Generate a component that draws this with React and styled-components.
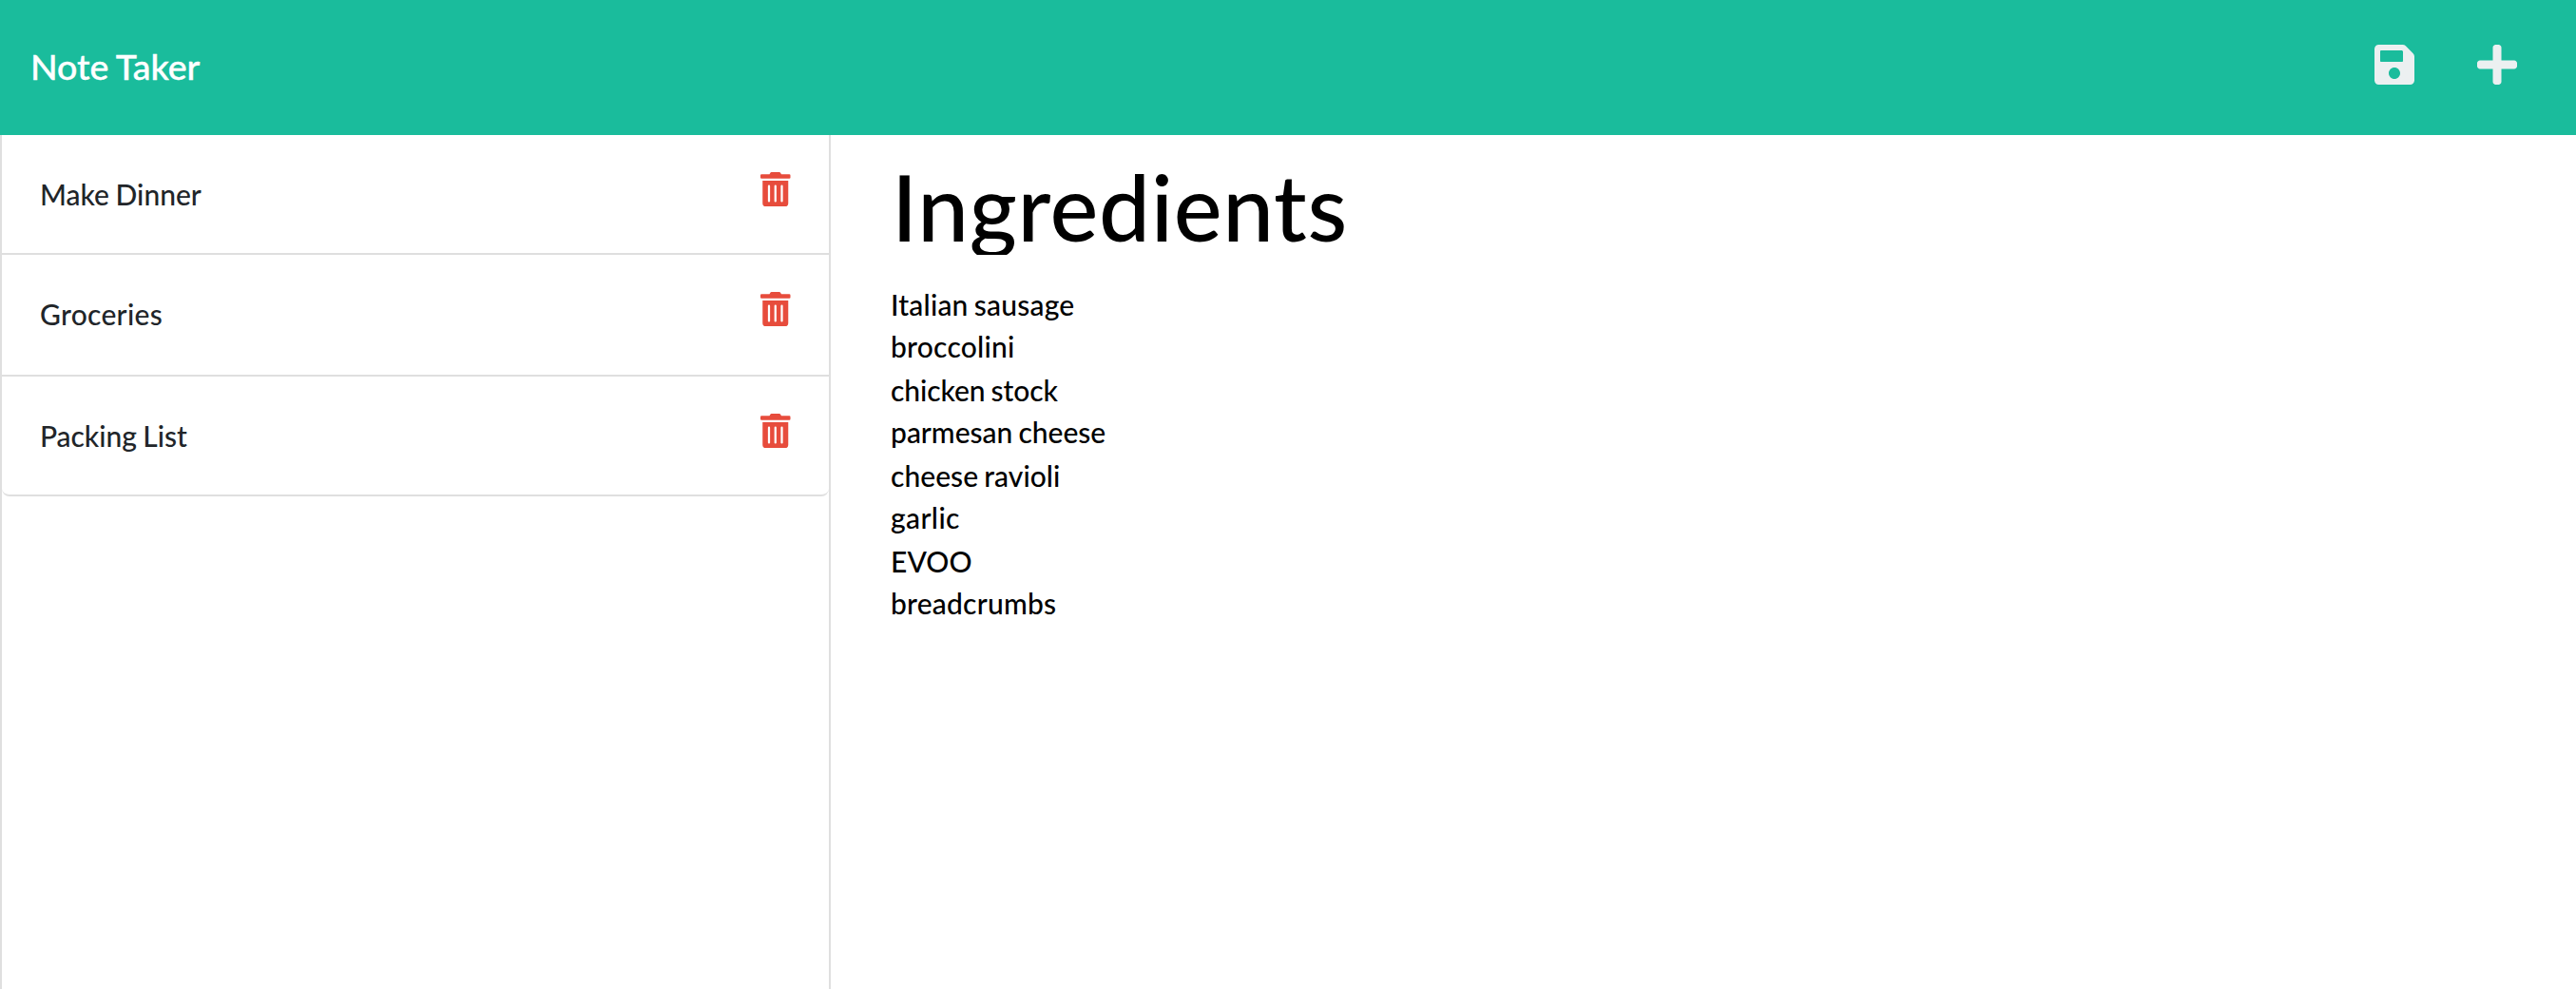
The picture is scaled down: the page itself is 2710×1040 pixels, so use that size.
import React from "react";
import styled, { createGlobalStyle } from "styled-components";
import { FaSave, FaPlus, FaTrashAlt } from "react-icons/fa";

const GlobalStyle = createGlobalStyle`
  *, *::before, *::after { box-sizing: border-box; }
  body {
    margin: 0;
    background: #fff;
    color: #212529;
    font-family: Lato, "Open Sans", sans-serif;
    font-size: 30px;
    font-weight: 500;
    line-height: 44px;
  }
`;

const Page = styled.div`
  display: flex;
  flex-direction: column;
  height: 100vh;
  overflow: hidden;
`;

const Navbar = styled.nav`
  display: flex;
  flex: none;
  align-items: center;
  justify-content: space-between;
  height: 142px;
  padding: 0 62px 6px 32px;
  background: #1abc9c;
`;

const Brand = styled.span`
  padding-top: 3px;
  color: #fff;
  font-size: 37.5px;
  line-height: 55px;
  word-spacing: -1px;
  -webkit-text-stroke: 0.4px #fff;
`;

const NavActions = styled.div`
  display: flex;
  gap: 66px;
`;

const IconButton = styled.button`
  display: flex;
  flex: none;
  padding: 0;
  border: 0;
  background: none;
  color: ${(p) => p.$color};
  font-size: ${(p) => p.$size}px;
  cursor: pointer;

  svg {
    width: 0.875em;
    height: 1em;
  }
`;

const Main = styled.main`
  display: flex;
  flex: 1;
  min-height: 0;
`;

const Sidebar = styled.aside`
  flex: none;
  width: 874px;
  border: solid #dfdfdf;
  border-width: 0 2px;
`;

const NoteList = styled.ul`
  margin: 0;
  padding: 0;
  list-style: none;
`;

const NoteItem = styled.li`
  display: flex;
  justify-content: space-between;
  align-items: flex-start;
  height: ${(p) => p.$height}px;
  padding: 39px 40.5px 0 40px;
  border-bottom: 2px solid #dfdfdf;

  &:last-child {
    border-radius: 0 0 8px 8px;
  }
`;

const NoteTitle = styled.span`
  padding-top: 1px;
  letter-spacing: ${(p) => p.$tracking}px;
  word-spacing: -1px;
`;

const Editor = styled.section`
  display: flex;
  flex: 1;
  flex-direction: column;
  padding: 32px 63px 0;
  color: #000;
`;

const Heading = styled.h1`
  height: 94px;
  margin: 0 0 30px;
  padding-left: 1px;
  overflow: hidden;
  font-size: 96px;
  font-weight: 500;
  line-height: 85px;
  letter-spacing: 0.7px;
`;

const Line = styled.div`
  height: 44px;
  letter-spacing: ${(p) => p.$tracking}px;
  word-spacing: -1.5px;

  &:nth-child(even) {
    height: 46px;
  }
`;

const notes = [
  { title: "Make Dinner", height: 126, tracking: 0 },
  { title: "Groceries", height: 128, tracking: 0.3 },
  { title: "Packing List", height: 126, tracking: -0.05 },
];

const ingredients = [
  { name: "Italian sausage", tracking: 0.2 },
  { name: "broccolini", tracking: 0.25 },
  { name: "chicken stock", tracking: -0.08 },
  { name: "parmesan cheese", tracking: 0 },
  { name: "cheese ravioli", tracking: 0.05 },
  { name: "garlic", tracking: 0.4 },
  { name: "EVOO", tracking: 0.1 },
  { name: "breadcrumbs", tracking: 0.22 },
];

export default function App() {
  return (
    <Page>
      <GlobalStyle />
      <Navbar>
        <Brand>Note Taker</Brand>
        <NavActions>
          <IconButton $size={48} $color="#ecf0f1" aria-label="Save">
            <FaSave />
          </IconButton>
          <IconButton $size={48} $color="#ecf0f1" aria-label="New">
            <FaPlus />
          </IconButton>
        </NavActions>
      </Navbar>
      <Main>
        <Sidebar>
          <NoteList>
            {notes.map((note) => (
              <NoteItem key={note.title} $height={note.height}>
                <NoteTitle $tracking={note.tracking}>{note.title}</NoteTitle>
                <IconButton $size={36} $color="#e74c3c" aria-label="Delete">
                  <FaTrashAlt />
                </IconButton>
              </NoteItem>
            ))}
          </NoteList>
        </Sidebar>
        <Editor>
          <Heading>Ingredients</Heading>
          <div>
            {ingredients.map((item) => (
              <Line key={item.name} $tracking={item.tracking}>
                {item.name}
              </Line>
            ))}
          </div>
        </Editor>
      </Main>
    </Page>
  );
}
